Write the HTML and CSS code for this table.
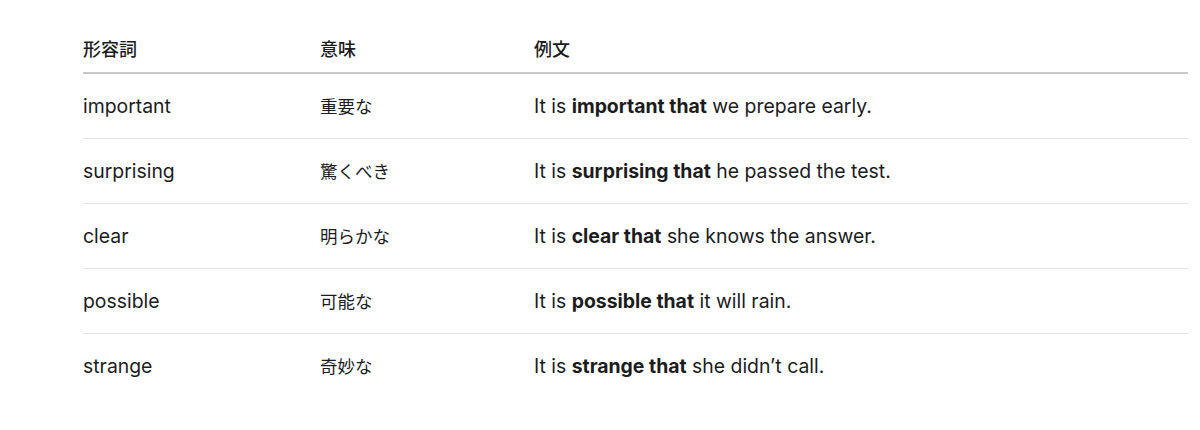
FILE: index.html
```html
<!DOCTYPE html>
<html lang="ja">
<head>
<meta charset="utf-8">
<title>形容詞</title>
<link rel="stylesheet" href="styles.css">
</head>
<body>
<main class="page">
  <table class="vocab">
    <colgroup>
      <col class="c-adj">
      <col class="c-mean">
      <col class="c-ex">
    </colgroup>
    <thead>
      <tr><th>形容詞</th><th>意味</th><th>例文</th></tr>
    </thead>
    <tbody>
      <tr><td>important</td><td class="jp">重要な</td><td>It is <b>important that</b> we prepare early.</td></tr>
      <tr><td>surprising</td><td class="jp">驚くべき</td><td>It is <b>surprising that</b> he passed the test.</td></tr>
      <tr><td>clear</td><td class="jp">明らかな</td><td>It is <b>clear that</b> she knows the answer.</td></tr>
      <tr><td>possible</td><td class="jp">可能な</td><td>It is <b>possible that</b> it will rain.</td></tr>
      <tr><td>strange</td><td class="jp">奇妙な</td><td>It is <b>strange that</b> she didn’t call.</td></tr>
    </tbody>
  </table>
</main>
</body>
</html>
```

FILE: styles.css
```css
html, body {
  margin: 0;
  padding: 0;
  background: #ffffff;
}
body {
  font-family: Inter, "Noto Sans CJK JP", sans-serif;
  color: #1c1c1e;
}
.page {
  padding: 27px 12px 0 83px;
}
.vocab {
  width: 100%;
  border-collapse: collapse;
  font-size: 19.4px;
  line-height: 22px;
}
.c-adj { width: 237px; }
.c-mean { width: 214px; }
.vocab th {
  text-align: left;
  font-weight: 500;
  font-size: 18px;
  padding: 12px 0 11px;
  border-bottom: 2px solid #c8c8c8;
  color: #1c1c1e;
}
.vocab td {
  padding: 21px 0;
  border-bottom: 1px solid #e4e4e4;
}
.vocab tbody tr:last-child td {
  border-bottom: none;
}
.vocab b {
  font-weight: 700;
}
.jp {
  font-family: "Noto Sans CJK JP", sans-serif;
  font-size: 17.5px;
}
```
